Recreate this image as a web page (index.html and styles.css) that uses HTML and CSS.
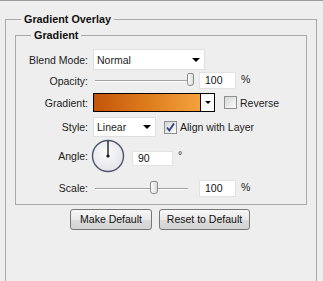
FILE: index.html
```html
<!DOCTYPE html>
<html lang="en">
<head>
	<meta charset="UTF-8">
	<title>Gradient Overlay</title>
	<link rel="stylesheet" href="styles.css">
</head>
<body>
	<div class="panel">
		<!-- 外层分组 -->
		<fieldset class="group outer">
			<legend>Gradient Overlay</legend>
			<!-- 内层分组 -->
			<fieldset class="group inner">
				<legend>Gradient</legend>

				<div class="row row-blend">
					<span class="lbl">Blend Mode:</span>
					<div class="select blend">Normal<span class="caret"></span></div>
				</div>

				<div class="row row-opacity">
					<span class="lbl">Opacity:</span>
					<div class="slider opacity">
						<span class="thumb" style="left:95px"></span>
					</div>
					<div class="field num">100</div>
					<span class="unit">%</span>
				</div>

				<div class="row row-gradient">
					<span class="lbl">Gradient:</span>
					<div class="swatch">
						<span class="ramp"></span>
						<span class="drop"><span class="caret small"></span></span>
					</div>
					<span class="check"></span>
					<span class="opt">Reverse</span>
				</div>

				<div class="row row-style">
					<span class="lbl">Style:</span>
					<div class="select style">Linear<span class="caret"></span></div>
					<span class="check on">
						<svg width="11" height="11" viewBox="0 0 11 11"><path d="M2 5.5 L4.3 8.5 L9 1.5" fill="none" stroke="#2f4180" stroke-width="1.8"/></svg>
					</span>
					<span class="opt">Align with Layer</span>
				</div>

				<div class="row row-angle">
					<span class="lbl">Angle:</span>
					<svg class="dial" width="34" height="34" viewBox="0 0 34 34">
						<defs>
							<radialGradient id="face" cx="45%" cy="40%" r="65%">
								<stop offset="0" stop-color="#fbfbfb"/>
								<stop offset="1" stop-color="#e2e3e8"/>
							</radialGradient>
						</defs>
						<circle cx="17" cy="17" r="15.5" fill="url(#face)" stroke="#4c5470" stroke-width="1.4"/>
						<line x1="17" y1="17" x2="17" y2="2" stroke="#111" stroke-width="1.3"/>
						<circle cx="17" cy="17" r="1.6" fill="#111"/>
					</svg>
					<div class="field deg">90</div>
					<span class="unit degsign">°</span>
				</div>

				<div class="row row-scale">
					<span class="lbl">Scale:</span>
					<div class="slider scale">
						<span class="thumb" style="left:58px"></span>
					</div>
					<div class="field num">100</div>
					<span class="unit">%</span>
				</div>
			</fieldset>

			<div class="buttons">
				<a href="javascript:" class="btn make">Make Default</a>
				<a href="javascript:" class="btn reset">Reset to Default</a>
			</div>
		</fieldset>
	</div>
</body>
</html>
```

FILE: styles.css
```css
html, body {
	margin: 0;
	padding: 0;
	background: #eeeeee;
}
body {
	font-family: "Liberation Sans", Arial, sans-serif;
	font-size: 10.5px;
	color: #1b1b1b;
}
.panel {
	height: 280px;
	overflow: hidden;
	border-top: 1px solid #9c9c9c;
	padding: 0 6px 0 5px;
}
fieldset {
	margin: 0;
	padding: 0;
	min-width: 0;
	border: 1px solid #a9a9a9;
}
legend {
	margin-left: 15px;
	padding: 0 3px;
	font-size: 10.8px;
	font-weight: bold;
	line-height: 14px;
	color: #111;
}
.outer {
	margin-top: 11px;
	padding-bottom: 80px;
}
.inner {
	margin: 2px 9px 0 9px;
	padding: 7px 0 7px 0;
}

/* 每一行 */
.row {
	display: flex;
	align-items: center;
}
.lbl {
	width: 72px;
	margin-right: 5px;
	text-align: right;
	flex: none;
}
.row-blend { height: 21px; }
.row-opacity { height: 19px; margin-top: 1px; }
.row-gradient { height: 19px; margin-top: 3px; }
.row-style { height: 20px; margin-top: 5px; }
.row-angle { height: 34px; margin-top: 2px; }
.row-scale { height: 18px; margin-top: 6px; }

/* 下拉框 */
.select {
	box-sizing: border-box;
	display: flex;
	align-items: center;
	height: 21px;
	padding-left: 3px;
	background: #fff;
	border: 1px solid #e0e0e0;
}
.select.blend { width: 112px; }
.select.style { width: 63px; height: 20px; }
.caret {
	width: 0;
	height: 0;
	margin-left: auto;
	margin-right: 4px;
	border-left: 4px solid transparent;
	border-right: 4px solid transparent;
	border-top: 4px solid #000;
}
.caret.small {
	margin: 0;
	border-left-width: 3px;
	border-right-width: 3px;
	border-top-width: 3px;
}

/* 滑块 */
.slider {
	position: relative;
	width: 101px;
	height: 19px;
	margin-left: -1px;
	flex: none;
}
.slider::before {
	content: "";
	position: absolute;
	left: 3px;
	right: 5px;
	top: 9px;
	height: 1px;
	background: #a2a2a2;
	box-shadow: 0 1px 0 #fff;
}
.thumb {
	position: absolute;
	top: 2px;
	width: 7px;
	height: 13px;
	box-sizing: border-box;
	border: 1px solid #8c8c8c;
	border-radius: 2px 2px 3px 3px;
	background: linear-gradient(to right, #fdfdfd, #dadada);
}
.slider.scale .thumb { top: 2px; width: 8px; }

/* 输入框 */
.field {
	box-sizing: border-box;
	height: 17px;
	line-height: 15px;
	background: #fff;
	border: 1px solid #e2e2e2;
	padding-left: 5px;
	color: #111;
}
.field.num {
	width: 37px;
	margin-left: 6px;
}
.field.deg {
	width: 41px;
	height: 15px;
	line-height: 13px;
	margin-left: 7px;
	margin-top: 4px;
}
.unit {
	margin-left: 5px;
	align-self: flex-start;
	margin-top: 2px;
}
.degsign { margin-top: 10px; }

/* 渐变条 */
.swatch {
	box-sizing: border-box;
	display: flex;
	width: 122px;
	height: 19px;
	border: 1px solid #000;
	background: #fff;
}
.ramp {
	flex: 1;
	background: linear-gradient(to right, #c4540c, #e0801f 55%, #f3a23d);
}
.drop {
	width: 13px;
	border-left: 1px solid #000;
	display: flex;
	align-items: center;
	justify-content: center;
}

/* 复选框 */
.check {
	box-sizing: border-box;
	width: 13px;
	height: 13px;
	flex: none;
	border: 1px solid #8e8f8f;
	background: linear-gradient(135deg, #d6d6d6, #fbfbfb);
	display: flex;
	align-items: center;
	justify-content: center;
}
.row-gradient .check { margin-left: 9px; }
.row-style .check { margin-left: 8px; }
.opt { margin-left: 3px; }
.check.on svg { display: block; }

.dial {
	display: block;
	margin-left: -2px;
	flex: none;
}

/* 按钮 */
.buttons {
	display: flex;
	justify-content: center;
	gap: 7px;
	margin-top: 4px;
	padding-right: 2px;
}
.btn {
	box-sizing: border-box;
	height: 21px;
	line-height: 19px;
	text-align: center;
	text-decoration: none;
	color: #111;
	border: 1px solid #767676;
	border-radius: 3px;
	background: linear-gradient(#f7f7f7, #e9e9e9 50%, #dcdcdc 51%, #d3d3d3);
}
.btn.make { width: 82px; }
.btn.reset { width: 91px; }
```
